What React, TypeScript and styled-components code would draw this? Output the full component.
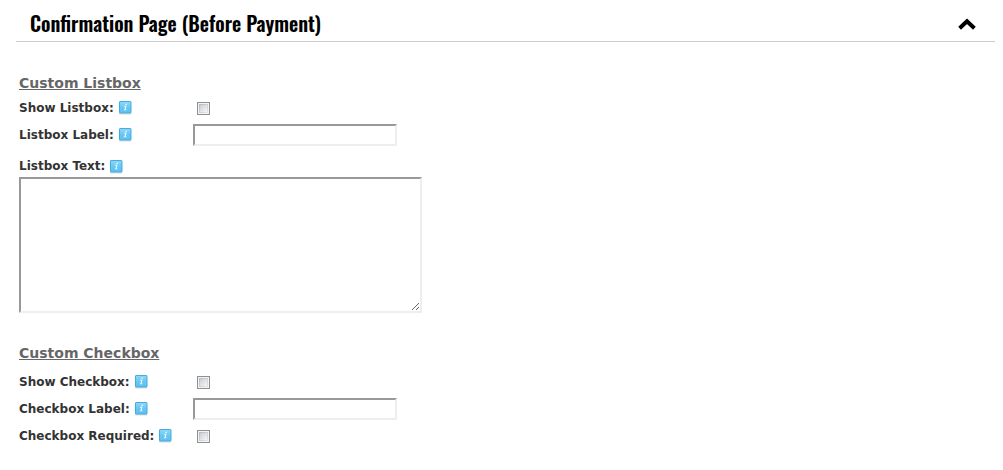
import React from "react";
import styled, { createGlobalStyle } from "styled-components";

const GlobalStyle = createGlobalStyle`
  *, *::before, *::after { box-sizing: border-box; }
  body {
    margin: 0;
    background: #fff;
    color: #333;
    font-family: Verdana, "DejaVu Sans", sans-serif;
    font-size: 12px;
  }
`;

const Header = styled.header`
  display: flex;
  align-items: center;
  justify-content: space-between;
  height: 42px;
  margin: 0 8px 0 16px;
  padding: 4px 18px 0 14px;
  border-bottom: 1px solid #ccc;
`;

const Title = styled.h1`
  margin: 0;
  color: #000;
  font-family: Oswald, "Liberation Sans Narrow", "Liberation Sans", sans-serif;
  font-size: 20px;
  font-weight: 600;
  line-height: 32px;
  white-space: nowrap;
`;

const CollapseButton = styled.button`
  display: flex;
  padding: 2px 0 0;
  border: 0;
  background: none;
  cursor: pointer;
`;

const Form = styled.form`
  padding: 31px 19px 20px;
`;

const Section = styled.section`
  & + & {
    margin-top: 30px;
  }
`;

const SectionTitle = styled.h2<{ $gap: number }>`
  margin: 0 0 ${(p) => p.$gap}px;
  color: #666;
  font-size: 14px;
  font-weight: 700;
  line-height: 20px;
  text-decoration: underline;
`;

const Row = styled.div`
  display: grid;
  grid-template-columns: 174px 1fr;
  align-items: center;
  height: 27px;
`;

const LabelCell = styled.div`
  display: flex;
  align-items: center;
  gap: 4px;
  font-weight: 700;
  line-height: 18px;
  white-space: nowrap;
`;

const Stack = styled.div`
  display: flex;
  flex-direction: column;
  align-items: flex-start;
  gap: 2px;
  margin-top: 9px;
`;

const Check = styled.input`
  appearance: none;
  width: 13px;
  height: 13px;
  margin: 2px 4px 0;
  padding: 2px;
  border: 1px solid #8e8f8f;
  background:
    linear-gradient(135deg, #cbcfd5, #f6f6f6) content-box,
    linear-gradient(135deg, #b4b8be, #e6e7e9) center / 9px 9px no-repeat,
    #f4f4f4;

  &:checked {
    background: #456 content-box;
  }
`;

const fieldBorder = `
  border: 2px solid;
  border-color: #999 #eee #eee #999;
  border-radius: 0;
  background: #fff;
  font: inherit;
  outline: none;
`;

const TextInput = styled.input`
  ${fieldBorder}
  width: 204px;
  max-width: 100%;
  height: 22px;
  padding: 1px 2px;
`;

const TextArea = styled.textarea`
  ${fieldBorder}
  display: block;
  width: 403px;
  max-width: 100%;
  height: 136px;
  padding: 2px;
  resize: both;
`;

const InfoIcon = () => (
  <svg width="14" height="15" viewBox="0 0 14 15" role="img" aria-label="Info">
    <defs>
      <linearGradient id="info-fill" x1="0" y1="0" x2="0" y2="1">
        <stop offset="0" stopColor="#8fd8f8" />
        <stop offset="0.5" stopColor="#68c8f2" />
        <stop offset="1" stopColor="#5cc0f0" />
      </linearGradient>
    </defs>
    <rect x="1" y="13" width="12" height="1.5" fill="#d9dde0" />
    <rect x="1.5" y="1.5" width="11.5" height="11.5" rx="0.5" fill="url(#info-fill)" stroke="#48abdd" />
    <path d="M7.6 3.8h1.5l-.3 1.2H7.3zM6.1 5.8h2.4L7.7 9.4h.9l-.2.8H5.7l.2-.8h.6l.6-2.7h-1.2z" fill="#e6f7ff" />
  </svg>
);

const Label = ({ htmlFor, children }: { htmlFor: string; children: React.ReactNode }) => (
  <LabelCell>
    <label htmlFor={htmlFor}>{children}</label>
    <InfoIcon />
  </LabelCell>
);

export default function App() {
  return (
    <>
      <GlobalStyle />
      <Header>
        <Title>Confirmation Page (Before Payment)</Title>
        <CollapseButton type="button" aria-label="Collapse">
          <svg width="20" height="14" viewBox="0 0 20 14">
            <path d="M2.6 11.3 10 4.3l7.4 7" fill="none" stroke="#000" strokeWidth="4" />
          </svg>
        </CollapseButton>
      </Header>
      <Form>
        <Section>
          <SectionTitle $gap={1}>Custom Listbox</SectionTitle>
          <Row>
            <Label htmlFor="show-listbox">Show Listbox:</Label>
            <Check id="show-listbox" type="checkbox" />
          </Row>
          <Row>
            <Label htmlFor="listbox-label">Listbox Label:</Label>
            <TextInput id="listbox-label" type="text" />
          </Row>
          <Stack>
            <Label htmlFor="listbox-text">Listbox Text:</Label>
            <TextArea id="listbox-text" />
          </Stack>
        </Section>
        <Section>
          <SectionTitle $gap={5}>Custom Checkbox</SectionTitle>
          <Row>
            <Label htmlFor="show-checkbox">Show Checkbox:</Label>
            <Check id="show-checkbox" type="checkbox" />
          </Row>
          <Row>
            <Label htmlFor="checkbox-label">Checkbox Label:</Label>
            <TextInput id="checkbox-label" type="text" />
          </Row>
          <Row>
            <Label htmlFor="checkbox-required">Checkbox Required:</Label>
            <Check id="checkbox-required" type="checkbox" />
          </Row>
        </Section>
      </Form>
    </>
  );
}
